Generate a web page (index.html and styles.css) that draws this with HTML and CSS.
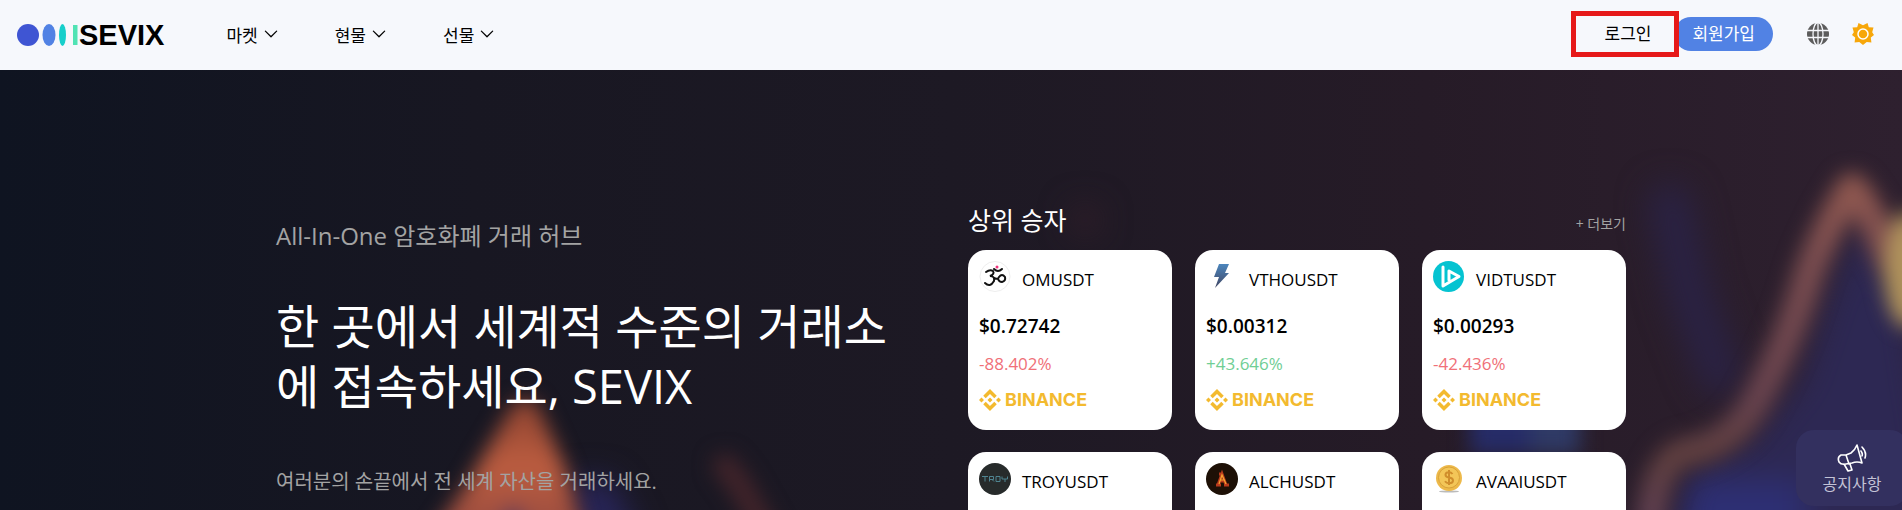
FILE: index.html
```html
<!DOCTYPE html>
<html lang="ko">
<head>
	<meta charset="utf-8">
	<title>SEVIX</title>
	<meta name="viewport" content="width=device-width, initial-scale=1">
	<link rel="stylesheet" href="styles.css">
</head>
<body>
	<!-- shared shapes -->
	<svg class="defs" aria-hidden="true">
		<symbol id="chevron" viewBox="0 0 12 8">
			<path d="M1 1l5 5 5-5" fill="none" stroke="currentColor" stroke-width="1.1" stroke-linecap="round" stroke-linejoin="round"/>
		</symbol>
		<symbol id="binance" viewBox="0 0 126.6 126.6">
			<path d="M38.7 53.2l24.6-24.6 24.6 24.6 14.3-14.3L63.3 0 24.4 38.9zM0 63.3L14.3 49l14.3 14.3-14.3 14.3zM38.7 73.4L63.3 98l24.6-24.6 14.3 14.3-38.9 38.9-38.9-38.9zM98 63.3L112.3 49l14.3 14.3-14.3 14.3zM77.8 63.3L63.3 48.8 48.8 63.3l14.5 14.5z" fill="#f3ba2f"/>
		</symbol>
	</svg>

	<header class="header">
		<a class="logo" href="#">
			<svg width="62" height="24" viewBox="0 0 62 24" aria-hidden="true">
				<circle cx="11" cy="12" r="11" fill="#3f55d3"/>
				<ellipse cx="32" cy="12" rx="6.5" ry="11" fill="#5182e4"/>
				<ellipse cx="45.5" cy="12" rx="3.5" ry="11" fill="#17cfcb"/>
				<rect x="56" y="2" width="4.5" height="20" fill="#50e3b4"/>
			</svg>
			<span>SEVIX</span>
		</a>
		<nav class="nav">
			<a href="#">마켓 <svg width="14" height="9"><use href="#chevron"/></svg></a>
			<a href="#">현물 <svg width="14" height="9"><use href="#chevron"/></svg></a>
			<a href="#">선물 <svg width="14" height="9"><use href="#chevron"/></svg></a>
		</nav>
		<div class="account">
			<a class="login" href="#">로그인</a>
			<a class="signup" href="#">회원가입</a>
		</div>
		<button class="icon-button" type="button" aria-label="Language">
			<svg width="22" height="22" viewBox="0 0 22 22">
				<circle cx="11" cy="11" r="11" fill="#5c5c5c"/>
				<g fill="none" stroke="#f6f8fc" stroke-width="1.3">
					<ellipse cx="11" cy="11" rx="5" ry="11.5"/>
					<path d="M11 0v22M0 7.5h22M0 14.5h22"/>
				</g>
			</svg>
		</button>
		<button class="icon-button" type="button" aria-label="Theme">
			<svg width="22" height="22" viewBox="0 0 22 22">
				<path d="M6.500 0L11 2.200 15.500 0l1.300 4.200 4.700.3-1.300 4.700L22 12l-3.200 2.400.6 5-4.700-.5L11 22l-3.700-3.100-4.700.5.600-5L0 12l1.800-2.800L.5 4.500l4.700-.3z" fill="#f7a70a"/>
				<circle cx="11" cy="11" r="5" fill="#f7a70a" stroke="#fff" stroke-width="1.5"/>
			</svg>
		</button>
	</header>

	<main class="hero">
		<!-- out of focus chart behind the content -->
		<svg class="backdrop" viewBox="0 0 1902 440" preserveAspectRatio="xMidYMin slice" aria-hidden="true">
			<defs>
				<linearGradient id="base">
					<stop offset="0" stop-color="#0f1421"/>
					<stop offset=".25" stop-color="#181722"/>
					<stop offset=".5" stop-color="#1d1924"/>
					<stop offset=".75" stop-color="#261b27"/>
					<stop offset="1" stop-color="#2e202f"/>
				</linearGradient>
				<linearGradient id="flame" x1="0" y1="0" x2="0" y2="1">
					<stop offset="0" stop-color="#8a412f"/>
					<stop offset=".45" stop-color="#bc5d40"/>
					<stop offset="1" stop-color="#8d463f"/>
				</linearGradient>
				<linearGradient id="trend" gradientUnits="userSpaceOnUse" x1="0" y1="80" x2="0" y2="440">
					<stop offset="0" stop-color="#9a5d4f"/>
					<stop offset=".3" stop-color="#7c4e50"/>
					<stop offset=".7" stop-color="#68434e"/>
					<stop offset=".85" stop-color="#5f3f3e"/>
					<stop offset="1" stop-color="#604050"/>
				</linearGradient>
				<filter id="soft" x="-50%" y="-50%" width="200%" height="200%" color-interpolation-filters="sRGB"><feGaussianBlur stdDeviation="10"/></filter>
				<filter id="haze" x="-100%" y="-100%" width="300%" height="300%" color-interpolation-filters="sRGB"><feGaussianBlur stdDeviation="16"/></filter>
			</defs>
			<rect width="1902" height="440" fill="url(#base)"/>
			<g filter="url(#haze)">
				<path d="M1670 480l20-80 60-30 50-60 30-90 28-70 50 80 40 260z" fill="#2d2853"/>
				<path d="M1670 135l20 90 30 80" fill="none" stroke="#2a2244" stroke-width="42" stroke-linecap="round"/>
				<path d="M570 410h40l30 60h-60z" fill="#29265c"/>
				<path d="M1685 410h120v70h-130z" fill="#2d2f74"/>
				<circle cx="1085" cy="150" r="14" fill="#341f2a"/>
			</g>
			<g filter="url(#soft)">
				<path d="M1470 335h60v50h-60z" fill="#262c68"/>
				<path d="M1530 335h50v50h-50z" fill="#2f3a66"/>
				<path d="M1650 460q4-70 36-78 50-6 76-62 30-56 48-120 20-50 42-82 16 16 30 54 14 34 40 70" fill="none" stroke="url(#trend)" stroke-width="30" stroke-linejoin="round"/>
				<ellipse cx="1908" cy="200" rx="24" ry="58" fill="#b0935c"/>
				<path d="M512 336q14-16 26 0l28 64 22 80H420l46-64z" fill="url(#flame)"/>
				<path d="M513 434l20 40h-40z" fill="#4a3464"/>
				<path d="M725 396l14 18 26 46" fill="none" stroke="#42242a" stroke-width="24" stroke-linecap="round"/>
			</g>
		</svg>

		<div class="container">
			<section class="intro">
				<p class="eyebrow">All-In-One 암호화폐 거래 허브</p>
				<h1>한 곳에서 세계적 수준의 거래소에 접속하세요, SEVIX</h1>
				<p class="lead">여러분의 손끝에서 전 세계 자산을 거래하세요.</p>
			</section>

			<section class="winners">
				<div class="winners-head">
					<h2>상위 승자</h2>
					<a href="#">+ 더보기</a>
				</div>
				<div class="cards">
					<article class="card">
						<div class="coin">
							<svg width="32" height="32" viewBox="0 0 32 32" aria-hidden="true">
								<circle cx="16" cy="15.5" r="15" fill="#fff" stroke="#eee"/>
								<path d="M7 11q4-3 7-1 2 3-3 5 5 0 4 5-4 7-9 2M15 17q4 2 5-1 3-4 6 0 1 4-3 5-3 0-4-3M15 8q4 4 8 0" fill="none" stroke="#111" stroke-width="2" stroke-linecap="round"/>
								<circle cx="18" cy="6" r="1.5" fill="#f0347c"/>
							</svg>
							<h3>OMUSDT</h3>
						</div>
						<p class="price">$0.72742</p>
						<p class="change down">-88.402%</p>
						<p class="exchange"><svg width="22" height="22" aria-hidden="true"><use href="#binance"/></svg>BINANCE</p>
					</article>
					<article class="card">
						<div class="coin">
							<svg width="32" height="32" viewBox="0 0 32 32" aria-hidden="true">
								<defs>
									<linearGradient id="bolt" x1="0" y1="0" x2="0" y2="1"><stop stop-color="#4c86bd"/><stop offset="1" stop-color="#414663"/></linearGradient>
								</defs>
								<path d="M13 3h10l-4 9h4L9 27l4-11H8z" fill="url(#bolt)"/>
							</svg>
							<h3>VTHOUSDT</h3>
						</div>
						<p class="price">$0.00312</p>
						<p class="change up">+43.646%</p>
						<p class="exchange"><svg width="22" height="22" aria-hidden="true"><use href="#binance"/></svg>BINANCE</p>
					</article>
					<article class="card">
						<div class="coin">
							<svg width="32" height="32" viewBox="0 0 32 32" aria-hidden="true">
								<circle cx="15.5" cy="15.5" r="15.5" fill="#05c3d1"/>
								<path d="M10 6v19l16-9.500-10-5.500v9" fill="none" stroke="#fff" stroke-width="3" stroke-linecap="round" stroke-linejoin="round"/>
							</svg>
							<h3>VIDTUSDT</h3>
						</div>
						<p class="price">$0.00293</p>
						<p class="change down">-42.436%</p>
						<p class="exchange"><svg width="22" height="22" aria-hidden="true"><use href="#binance"/></svg>BINANCE</p>
					</article>
					<article class="card">
						<div class="coin">
							<svg width="32" height="32" viewBox="0 0 32 32" aria-hidden="true">
								<circle cx="16" cy="16" r="16" fill="#272b2b"/>
								<path d="M3 13.500h6M6 13.500v5M10.500 18.500v-5h4v3h-4M13 16.500l2 2M17 13.500h4v5h-4zM23 13.500v2.500h5.500v-2.500M26 16v3" fill="none" stroke="#4f8490"/>
							</svg>
							<h3>TROYUSDT</h3>
						</div>
					</article>
					<article class="card">
						<div class="coin">
							<svg width="32" height="32" viewBox="0 0 32 32" aria-hidden="true">
								<circle cx="16" cy="16" r="16" fill="#1d1006"/>
								<path d="M12 22l4-11 4 11M13 18h6M13 11h4M18 22h5M10 22h5" fill="none" stroke="#b93a1c" stroke-width="3"/>
								<path d="M13 21l3-9 4 9M14 17h5" fill="none" stroke="#f6a531" stroke-width="1.2"/>
							</svg>
							<h3>ALCHUSDT</h3>
						</div>
					</article>
					<article class="card">
						<div class="coin">
							<svg width="32" height="32" viewBox="0 0 32 32" aria-hidden="true">
								<ellipse cx="16" cy="28.5" rx="10" ry="1" fill="#bbb"/>
								<circle cx="16" cy="15" r="13" fill="#edb94a"/>
								<circle cx="16" cy="14.5" r="10.5" fill="#f3c658" stroke="#d9a23a"/>
								<path d="M19.500 11q-1.500-2-4-1.800-3 .3-3 2.600t3.500 2.700q4 .5 4 3t-3.500 2.800q-3 .2-4.500-2M16 7v15" fill="none" stroke="#d08e2c" stroke-width="2"/>
							</svg>
							<h3>AVAAIUSDT</h3>
						</div>
					</article>
				</div>
			</section>
		</div>
	</main>

	<a class="notice" href="#">
		<svg width="32" height="28" viewBox="0 0 32 28" fill="none" stroke="#fff" stroke-width="1.6" stroke-linecap="round" stroke-linejoin="round" aria-hidden="true">
			<path d="M10 11l5-2q4-3 6-8l5 18q-5-2-10 0l-6 1q-5 1-7-2-2-5 2-7zM10 11l3 9M8 20l4 7 4-1-2-6M25 7q2 3 1 5M26 3q5 5 3 11"/>
		</svg>
		공지사항
	</a>
</body>
</html>
```
FILE: styles.css
```css
* { box-sizing: border-box; }

body {
	margin: 0;
	height: 100vh;
	display: flex;
	flex-direction: column;
	overflow: hidden;
	font-family: "Open Sans", "Noto Sans CJK KR", sans-serif;
	font-size: 16px;
	color: #000;
}

h1, h2, h3, p { margin: 0; font-weight: 400; }

a { color: inherit; text-decoration: none; }

.defs { display: none; }

/* header */

.header {
	flex: none;
	display: flex;
	align-items: center;
	height: 70px;
	padding: 0 28px 2px 17px;
	background-color: #f6f8fc;
}

.logo {
	display: flex;
	align-items: center;
	padding-top: 2px;
	font: bold 29px/32px "Liberation Sans", Arial, sans-serif;
}

.nav {
	display: flex;
	gap: 57px;
	margin-left: 62px;
}

.nav a {
	display: flex;
	align-items: center;
	gap: 6px;
	font-size: 17px;
}

.account {
	display: flex;
	align-items: center;
	margin-left: auto;
	margin-right: 34px;
	font-size: 17px;
}

.login {
	position: relative;
	z-index: 1;
	padding: 0 23px 0 29px;
	border: 5px solid #e61919;
	line-height: 36px;
}

.signup {
	margin-left: -5px;
	padding: 0 18px;
	border-radius: 17px;
	background-color: #5182e4;
	color: #fff;
	line-height: 34px;
}

.icon-button {
	display: flex;
	padding: 0;
	border: 0;
	background: none;
	cursor: pointer;
}

.icon-button + .icon-button { margin-left: 23px; }

/* hero */

.hero {
	position: relative;
	flex: 1;
	min-height: 0;
	overflow: hidden;
	background-color: #181722;
}

.backdrop {
	position: absolute;
	top: 0;
	left: 0;
	width: 100%;
	height: 100%;
}

.container {
	position: relative;
	display: grid;
	grid-template-columns: 1fr 658px;
	gap: 64px;
	max-width: 1350px;
	margin: 0 auto;
	padding-top: 132px;
	color: #fff;
}

.intro { padding-top: 16px; }

.eyebrow {
	color: #a3a3a3;
	font-size: 24px;
	line-height: 36px;
}

h1 {
	margin-top: 42px;
	font-size: 47px;
	line-height: 60px;
	word-break: break-all;
}

.lead {
	margin-top: 50px;
	color: #a3a3a3;
	font-size: 20px;
	line-height: 32px;
}

.winners-head {
	display: flex;
	justify-content: space-between;
	align-items: flex-end;
	padding-bottom: 12px;
}

h2 {
	font-size: 25px;
	line-height: 36px;
}

.winners-head a {
	color: #a3a3a3;
	font-size: 14px;
	line-height: 28px;
}

.cards {
	display: grid;
	grid-template-columns: repeat(3, 1fr);
	gap: 22px 23px;
}

.card {
	height: 180px;
	padding: 11px;
	border-radius: 18px;
	background-color: #fff;
	color: #000;
}

.coin {
	display: flex;
	gap: 11px;
}

h3 {
	font-size: 17px;
	line-height: 38px;
}

.price {
	margin-top: 13px;
	font-size: 19px;
	font-weight: 600;
	line-height: 28px;
}

.change {
	margin-top: 10px;
	font-size: 17px;
	line-height: 28px;
}

.down { color: #f07078; }
.up { color: #70ce94; }

.exchange {
	display: flex;
	align-items: center;
	gap: 4px;
	margin-top: 10px;
	color: #f3ba2f;
	font: bold 18px/24px Inter, sans-serif;
}

/* floating notice */

.notice {
	position: fixed;
	right: -6px;
	bottom: 4px;
	display: flex;
	flex-direction: column;
	align-items: center;
	width: 112px;
	padding: 14px 0 9px;
	border-radius: 18px;
	background-color: #33305f;
	color: #c4c3d6;
	font-size: 16px;
	line-height: 25px;
}
```
